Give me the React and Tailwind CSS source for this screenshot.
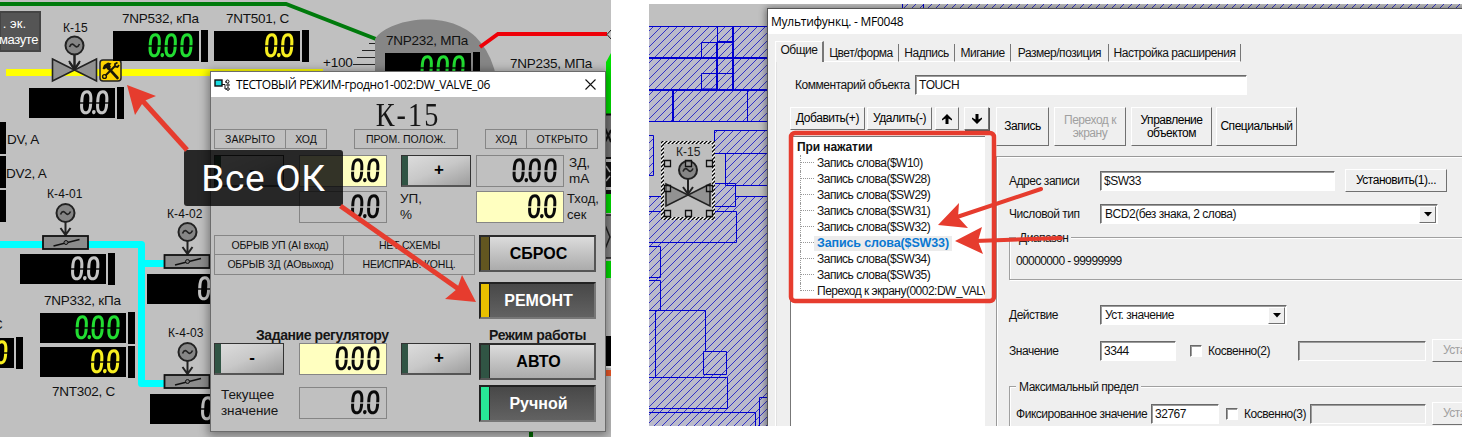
import React from "react";

/* ---------- seven-segment style readouts ---------- */

function Digits({ value, className = "" }) {
  return (
    <span
      className={
        "inline-flex origin-right -skew-x-4 scale-x-[.78] font-['Roboto'] text-[33px] font-medium leading-[38px] tracking-[1.6px] [mask-image:linear-gradient(#000_48%,transparent_49%,transparent_51%,#000_52%)] " +
        className
      }
    >
      {value.split("").map((c, i) =>
        c === "." ? (
          <span key={i} className="-ml-[5px] w-[5px]">.</span>
        ) : (
          <span key={i}>{c}</span>
        )
      )}
    </span>
  );
}

function Led({ value, className }) {
  return (
    <div className={"absolute flex h-[32px] items-center gap-[2px] " + className}>
      <div className="flex h-[30px] w-[86px] items-center justify-end bg-black pr-[4px]">
        <Digits value={value} />
      </div>
      <div className="h-[32px] w-[7px] bg-black" />
    </div>
  );
}

function Tag({ className, small, children }) {
  return (
    <span
      className={
        "absolute whitespace-nowrap font-['Liberation_Sans'] leading-[16px] text-[#111] " +
        (small ? "text-[12px] tracking-[.1px] " : "text-[13.5px] tracking-[-.25px] ") +
        className
      }
    >
      {children}
    </span>
  );
}

/* ---------- process diagram drawing ---------- */

function Motor({ x, y, stem }) {
  return (
    <g transform={`translate(${x} ${y})`} stroke="#222" strokeWidth="2" fill="none">
      <circle r="9" fill="#868686" />
      <path d="M-5 1.5 C-3 -3 -1 -1 0 0 S3 3 5 -1.5" strokeWidth="1.7" />
      <path d={`M0 9 V${stem} M-5 ${stem - 7} L0 ${stem} L5 ${stem - 7}`} />
    </g>
  );
}

function GateValve({ x, y }) {
  return (
    <path
      d={`M${x - 22} ${y - 11} L${x} ${y} L${x - 22} ${y + 11} Z M${x + 22} ${y - 11} L${x} ${y} L${x + 22} ${y + 11} Z`}
      fill="#929292"
      stroke="#222"
      strokeWidth="1.6"
    />
  );
}

function Damper({ x, y }) {
  return (
    <g transform={`translate(${x} ${y})`}>
      <rect x="0.5" y="0.5" width="45" height="13" fill="#8c8c8c" stroke="#111" strokeWidth="1.8" />
      <path d="M11 10.5 L37 4" stroke="#111" strokeWidth="1.6" />
      <circle cx="23.5" cy="7" r="2" fill="#777" stroke="#111" />
    </g>
  );
}

function Piping() {
  return (
    <svg className="absolute inset-0" width="611" height="437" viewBox="0 0 611 437" fill="none">
      <path d="M0 4 H286 L376 39" stroke="#007a0c" strokeWidth="4" />
      <path d="M375 80 V39 C390 17 455 8 481 43 Q492 56 497 80 Z" fill="#868686" />
      <path d="M480 47 L498 34 H607" stroke="#ee0008" strokeWidth="4" />
      <path d="M611 30 L607 34.5 L611 39" stroke="#222" />
      <path d="M369 43.500H375 M362 50.500H375 M357 57.500H375 M353 64.500H375 M350 71.500H375" stroke="#222" />
      <path d="M6 72.500 H323" stroke="#ffff00" strokeWidth="7" />
      <path d="M0 244.500 H141.500 V383.500 H165 M141 263.500 H165" stroke="#00ffff" strokeWidth="7" strokeLinejoin="round" />
      <Motor x={74.5} y={45.500} stem={24} />
      <GateValve x={74.5} y={70} />
      <path d="M74.500 55 V69 M69 61 L74.500 69 L80 61" stroke="#222" strokeWidth="2" />
      <Motor x={65.500} y={213} stem={22} />
      <Damper x={42.500} y={235.500} />
      <Motor x={187.500} y={232} stem={22} />
      <Damper x={164} y={254.500} />
      <Motor x={187.500} y={352} stem={22} />
      <Damper x={164} y={374.500} />

      <g transform="translate(99 59)">
        <rect x="1" y="1" width="21" height="21" rx="3" fill="#ffd400" stroke="#222" strokeWidth="1.5" />
        <path d="M8 7.500 L18.500 19" stroke="#1a1608" strokeWidth="2.6" strokeLinecap="round" />
        <path d="M3.500 9.500 L5 6 L9 3.500 L12.500 4.500 L11 6 L12 8 L9 11 L7.500 9 L5 10.500 Z" fill="#1a1608" />
        <path d="M6.500 16.500 L16 7" stroke="#1a1608" strokeWidth="2" />
        <path d="M18.500 3.500 L16 5 L16 7.500 L18.500 8 L20 6" stroke="#1a1608" strokeWidth="1.8" />
        <circle cx="5.500" cy="17.500" r="1.900" stroke="#1a1608" strokeWidth="1.4" />
      </g>

      <path d="M606 62 L611 53 V114 H606 Z" fill="#00df00" />
      <path d="M605 115 H611 V157 H605 Z" fill="#777" />
      <path d="M605 114.500 H611 M605 128 L611 142 M605 142 L611 130 M605 158 H611" stroke="#111" strokeWidth="2" />
      <path d="M605 162 H611 V187 H605 Z" fill="#111" />
      <path d="M606 166 L610 172 M606 181 L610 176" stroke="#bbb" strokeWidth="1.5" />
      <path d="M605 192 H611" stroke="#111" strokeWidth="4" />
      <path d="M605 194 H611 V213 H605 Z M605 261 H611 V278 H605 Z" fill="#00df00" />
      <path d="M605 215 H611 V258 H605 Z" fill="#868686" />
      <path d="M605 215 H611 M605 258 H611 M605 225 L610 237 L605 249" stroke="#222" strokeWidth="1.5" />
      <path d="M605 336 H611 V366 H605 Z" fill="#000" />
      <path d="M605 367 H611" stroke="#eee" strokeWidth="2" />
      <path d="M605 370 H611 V376 H605 Z" fill="#f05a28" />
      <path d="M531 431 V437" stroke="#006b00" strokeWidth="4" />
    </svg>
  );
}

/* ---------- test-mode window ---------- */

function Cell({ className = "", children }) {
  return (
    <div className={"flex items-center justify-center whitespace-nowrap border border-[#868686] text-[10.5px] leading-none text-[#111] " + className}>
      {children}
    </div>
  );
}

function Field({ value, className = "" }) {
  return (
    <div className={"flex h-[32px] w-[88px] shrink-0 items-center justify-end border border-[#858585] pr-[4px] text-[#0a0a0a] " + className}>
      <Digits value={value} />
    </div>
  );
}

function StepButton({ children }) {
  return (
    <button className="flex h-[32px] w-[70px] shrink-0 border border-b-2 border-[#333] border-b-[#555] bg-linear-to-br from-[#dedede] via-[#c8c8c8] to-[#9d9d9d] p-0">
      <span className="h-full w-[6px] bg-[#305444]" />
      <span className="flex-1 text-[17px] font-bold leading-[28px] text-black">{children}</span>
    </button>
  );
}

function ModeButton({ lamp, dark, className = "", children }) {
  return (
    <button
      className={
        "flex h-[37px] w-[117px] shrink-0 border-2 p-0 " +
        (dark
          ? "border-[#222] border-r-[#777] border-b-[#777] bg-linear-to-b from-[#484848] to-[#626262] text-white "
          : "border-[#2b2b2b] border-r-[#555] border-b-[#555] bg-linear-to-b from-[#dcdcdc] to-[#ababab] text-black ") +
        className
      }
    >
      <span className={"h-full w-[9px] border-r border-[#222] " + lamp} />
      <span className="flex-1 pr-[7px] text-center text-[16px] font-bold leading-[33px]">{children}</span>
    </button>
  );
}

function TestWindow() {
  return (
    <section className="absolute left-[210px] top-[71px] flex h-[361px] w-[396px] flex-col border border-[#6c6c6c] bg-[#c0c0c0] font-['Liberation_Sans'] text-[#161616] shadow-[0_2px_9px_2px_rgba(0,0,0,.38)]">
      <header className="flex h-[25px] shrink-0 items-center bg-white pl-[3px] pr-[9px]">
        <svg width="17" height="13" viewBox="0 0 17 13" fill="none" stroke="#111">
          <rect x="1" y="2" width="7" height="6" fill="#18dbe2" strokeWidth="1.4" />
          <path d="M8 6.500 H11 V11 H13 M11 4 H13" />
          <circle cx="13.500" cy="3.500" r="1.500" /><circle cx="14" cy="7" r="1.200" /><circle cx="14" cy="11" r="1.300" />
        </svg>
        <h1 className="ml-[5px] flex-1 whitespace-nowrap font-['Open_Sans'] text-[12px] leading-[18px] tracking-[-.41px] text-black">
          ТЕСТОВЫЙ РЕЖИМ-гродно1-002:DW_VALVE_06
        </h1>
        <svg width="11" height="11" viewBox="0 0 11 11" stroke="#111" strokeWidth="1.1"><path d="M.5 .5 L10.500 10.500 M10.500 .5 L.5 10.500" /></svg>
      </header>

      <div className="flex h-[32px] justify-center">
        <span className="block scale-x-[.83] font-['Liberation_Serif'] text-[34px] leading-[36px] tracking-[2.5px]">К-15</span>
      </div>

      <div className="flex h-[20px] pl-[3px]">
        <Cell className="w-[72px]">ЗАКРЫТО</Cell>
        <Cell className="-ml-px w-[42px]">ХОД</Cell>
        <Cell className="ml-[27px] w-[104px]">ПРОМ. ПОЛОЖ.</Cell>
        <Cell className="ml-[27px] w-[42px]">ХОД</Cell>
        <Cell className="-ml-px w-[72px]">ОТКРЫТО</Cell>
      </div>

      <div className="mt-[6px] flex h-[32px] pl-[3px]">
        <StepButton>-</StepButton>
        <Field value="0.0" className="ml-[15px] bg-[#ffffc0]" />
        <div className="ml-[14px]"><StepButton>+</StepButton></div>
        <Field value="0.00" className="ml-[5px]" />
        <p className="ml-[5px] text-[13.5px] leading-[16px]">ЗД,<br />mA</p>
      </div>
      <div className="mt-[4px] flex h-[32px] pl-[88px]">
        <Field value="0.0" />
        <p className="ml-[13px] w-[76px] text-[13.5px] leading-[16px]">УП,<br />%</p>
        <Field value="0.0" className="bg-[#ffffc0]" />
        <p className="ml-[3px] text-[13px] leading-[16px]">Тход,<br />сек</p>
      </div>

      <div className="mt-[12px] flex pl-[3px]">
        <div className="w-[265px]">
          <div className="grid h-[39px] w-[260px] grid-cols-[130px_131px] grid-rows-[20px_20px] tracking-[-.2px]">
            <Cell className="pl-[2px]">ОБРЫВ УП (AI вход)</Cell>
            <Cell className="-ml-px pl-[1px]">НЕТ СХЕМЫ</Cell>
            <Cell className="-mt-px pl-[3px]">ОБРЫВ ЗД (AOвыход)</Cell>
            <Cell className="-ml-px -mt-px">НЕИСПРАВ. КОНЦ.</Cell>
          </div>
          <p className="mt-[54px] pl-[42px] text-[14px] font-bold leading-[15px] tracking-[-.42px]">Задание регулятору</p>
          <div className="flex">
            <StepButton>-</StepButton>
            <Field value="0.00" className="ml-[15px] bg-[#ffffc0]" />
            <div className="ml-[14px]"><StepButton>+</StepButton></div>
          </div>
          <div className="mt-[12px] flex">
            <p className="w-[85px] pl-[7px] text-[13.5px] leading-[16px] tracking-[-.1px]">Текущее<br />значение</p>
            <Field value="0.0" />
          </div>
        </div>
        <div className="flex w-[117px] flex-col">
          <ModeButton lamp="bg-[#625620]">СБРОС</ModeButton>
          <ModeButton dark lamp="bg-[#e8c000]" className="mt-[10px]">РЕМОНТ</ModeButton>
          <p className="mt-[9px] whitespace-nowrap pl-[10px] text-[14px] font-bold leading-[15px] tracking-[-.35px]">Режим работы</p>
          <ModeButton lamp="bg-[#305444]">АВТО</ModeButton>
          <ModeButton dark lamp="bg-[#28e696]" className="mt-[5px]">Ручной</ModeButton>
        </div>
      </div>
    </section>
  );
}

function ProcessScreen() {
  return (
    <main className="relative h-[437px] w-[611px] shrink-0 overflow-hidden bg-[#c0c0c0]">
      <Piping />
      <div className="absolute -left-px top-[11px] flex h-[41px] w-[42px] flex-col items-end whitespace-nowrap border-2 border-[#444] bg-[#555] pt-[3px] font-['Liberation_Sans'] text-[13px] leading-[16px] text-white">
        <p className="pr-[13px]">. эк.</p>
        <p className="pr-px tracking-[-.4px]">мазуте</p>
      </div>
      <Tag small className="left-[63px] top-[20px]">К-15</Tag>
      <Tag className="left-[122px] top-[11px]">7NP532, кПа</Tag>
      <Tag className="left-[226px] top-[11px]">7NT501, С</Tag>
      <Tag className="left-[386px] top-[33px]">7NP232, МПа</Tag>
      <Tag className="left-[510px] top-[56px]">7NP235, МПа</Tag>
      <Tag className="left-[323px] top-[55px]">+100</Tag>
      <Tag className="left-[7px] top-[132px]">DV, A</Tag>
      <Tag className="left-[6px] top-[166px]">DV2, A</Tag>
      <Tag small className="left-[47px] top-[186px]">К-4-01</Tag>
      <Tag small className="left-[167px] top-[206px]">К-4-02</Tag>
      <Tag small className="left-[168px] top-[325px]">К-4-03</Tag>
      <Tag className="left-[44px] top-[293px]">7NP332, кПа</Tag>
      <Tag className="left-[52px] top-[384px]">7NT302, С</Tag>
      <Tag className="-left-[7px] top-[317px]">С</Tag>
      <Led value="0.00" className="left-[113px] top-[30px] text-[#22dd32]" />
      <Led value="0.0" className="left-[214px] top-[30px] text-[#f7ee20]" />
      <Led value="0.0" className="left-[29px] top-[87px] text-[#c4c4c4]" />
      <Led value="0.0" className="left-[20px] top-[253px] text-[#c4c4c4]" />
      <Led value="0.00" className="left-[40px] top-[312px] text-[#22dd32]" />
      <Led value="0.0" className="left-[40px] top-[346px] text-[#f7ee20]" />
      <Led value="0.0" className="left-[147px] top-[273px] text-[#c4c4c4]" />
      <Led value="0.0" className="left-[150px] top-[393px] text-[#c4c4c4]" />
      <Led value="0.0" className="-left-[72px] top-[337px] text-[#f7ee20]" />
      <Led value="0.00" className="left-[385px] top-[52px] text-[#22dd32]" />
      <div className="absolute left-0 top-[122px] flex w-[6px] flex-col gap-[2px]">
        <div className="h-[32px] bg-black" />
        <div className="h-[32px] bg-black" />
        <div className="h-[32px] bg-black" />
      </div>
      <TestWindow />
      <div className="absolute left-[184px] top-[150px] flex h-[56px] w-[159px] items-center justify-center rounded-[3px] bg-black/80 font-['Roboto'] text-[37px] leading-none tracking-[.7px] text-white">
        Все ОК
      </div>
      <svg className="absolute inset-0" width="611" height="437" viewBox="0 0 611 437" fill="#e63c2e">
        <path d="M187 150 L140 98" stroke="#e63c2e" strokeWidth="5" />
        <path d="M127 85 L156 96 L144 101 L135 115 Z" />
        <path d="M340.500 206 L460 290" stroke="#e63c2e" strokeWidth="5" />
        <path d="M476 302 L462 275 L457 289 L445 299 Z" />
      </svg>
    </main>
  );
}

/* ---------- editor canvas behind the dialog ---------- */

function EditorCanvas() {
  return (
    <svg className="absolute inset-0" width="813" height="422" viewBox="649 4 813 422" fill="none">
      <defs>
        <pattern id="hatch" width="8" height="8" patternUnits="userSpaceOnUse">
          <path d="M-1 9 L9 -1 M-1 1 L1 -1 M7 9 L9 7" stroke="#2424c4" strokeWidth=".9" />
        </pattern>
        <pattern id="ants" width="4" height="4" patternUnits="userSpaceOnUse">
          <rect width="4" height="4" fill="#fff" />
          <path d="M-1 5 L5 -1 M-1 1 L1 -1 M3 5 L5 3" stroke="#000" strokeWidth="1.300" />
        </pattern>
      </defs>
      <rect x="649" y="4" width="813" height="422" fill="#c0c0c0" />
      <path fill="#babacb" d="M649 26H768V121H649Z M714 130H768V153H714Z M725 154H768V185H725Z M715 183H736V206H715Z M649 196H768V426H649Z M649 135H654V175H649Z" />
      <path fill="url(#hatch)" d="M649 26H768V121H649Z M714 130H768V153H714Z M725 154H768V185H725Z M715 183H736V206H715Z M649 196H768V426H649Z M649 135H654V175H649Z M902 4H1462V9H902Z" />
      <g stroke="#0000ce" strokeWidth="1">
        <path d="M649 26.500H768 M649 121.500H768 M747.500 90V121 M717.500 26V90 M649 135.500H653.500V175.500H649 M768 130.500H714.500V153.500H768 M768 185.500H725.500V154 M715 183.500H735.500V206.500H715 M768 196.500H736 M649 196.500H663 M649 211.500H736.500V242.500H649 M649 246.500H660.500V277.500H649 M649 280.500H660.500V310 M649 310.500H705.500V351 M655.500 310V377 M703.500 351.500H726.500V374.500H703.500Z M649 377.500H727.500V408.500H649 M649 412.500H755.500V426 M768 397.500H759.500V426 M902.500 4V9 M923.500 4V9" />
        <path strokeWidth="2" d="M649 58H768 M649 90H768 M733 26V90 M717 42H733 M717 42V90 M673 90V121" />
        <path d="M701.500 42.500H717V58H701.500Z M701.500 73.500H717V89H701.500Z M717 73.500H733" />
      </g>
      <rect x="661" y="141" width="54" height="79" fill="url(#ants)" />
      <rect x="664" y="144" width="48" height="73" fill="#bebebe" />
      <GateValve x={688} y={195} />
      <Motor x={688} y={170} stem={24} />
      <g stroke="#111" strokeWidth="1.300" fill="#c0c0c0">
        <path d="M664.500 160.500h6v6h-6z M685.500 160.500h6v6h-6z M706.500 160.500h6v6h-6z M664.500 185.500h6v6h-6z M706.500 185.500h6v6h-6z M664.500 210.500h6v6h-6z M685.500 210.500h6v6h-6z M706.500 210.500h6v6h-6z" fillOpacity=".3" />
      </g>
    </svg>
  );
}

/* ---------- property dialog ---------- */

const raised = "border-[1.5px] border-t-white border-l-white border-r-[#707070] border-b-[#707070] bg-[#efefef] ";
const sunken = "border border-t-[#696969] border-l-[#696969] border-r-white border-b-white shadow-[inset_1px_1px_0_#9b9b9b] ";

function Btn({ className = "", disabled, children }) {
  return (
    <button
      disabled={disabled}
      className={"flex shrink-0 items-center justify-center whitespace-nowrap text-center leading-[13px] " + raised + (disabled ? "text-[#a0a0a0] " : "text-black ") + className}
    >
      {children}
    </button>
  );
}

function Input({ value = "", disabled, className = "" }) {
  return (
    <div className={"flex h-[20px] shrink-0 items-center whitespace-nowrap pl-[3px] " + sunken + (disabled ? "bg-[#ededed] " : "bg-white ") + className}>
      {value}
    </div>
  );
}

function Select({ value, className = "" }) {
  return (
    <div className={"flex h-[20px] shrink-0 items-center justify-between whitespace-nowrap bg-white pl-[4px] " + sunken + className}>
      {value}
      <span className={"mr-px flex h-[17px] w-[17px] items-center justify-center " + raised}>
        <svg width="8" height="5" viewBox="0 0 8 5"><path d="M0 0H8L4 4.500Z" fill="#000" /></svg>
      </span>
    </div>
  );
}

function Check({ label, className = "" }) {
  return (
    <div className={"flex shrink-0 items-center whitespace-nowrap " + className}>
      <span className={"mr-[6px] h-[12px] w-[12px] bg-white " + sunken} />
      {label}
    </div>
  );
}

const steps = [
  "Запись слова($W10)",
  "Запись слова($SW28)",
  "Запись слова($SW29)",
  "Запись слова($SW31)",
  "Запись слова($SW32)",
  "Запись слова($SW33)",
  "Запись слова($SW34)",
  "Запись слова($SW35)",
  "Переход к экрану(0002:DW_VALVE_06)",
];

function EventTree() {
  return (
    <div className="h-[292px] w-[195px] shrink-0 overflow-hidden border-l border-t border-[#777] bg-white pt-[2px] text-[12px]">
      <p className="pl-[6px] font-bold leading-[16px] tracking-[-.1px]">При нажатии</p>
      <ul>
        {steps.map((s, i) => (
          <li key={s} className="ml-[9px] flex h-[16px] items-center">
            <span className={"flex w-[14px] shrink-0 self-stretch border-l border-dotted border-[#999] " + (i === steps.length - 1 ? "mb-[8px]" : "")}>
              <span className="h-[8px] w-full border-b border-dotted border-[#999]" />
            </span>
            <span
              className={
                "whitespace-nowrap px-[3px] leading-[15px] " +
                (i === 5 ? "bg-[#ececec] text-[12.5px] font-bold tracking-[-.12px] text-[#0a78d2]" : "tracking-[-.5px]")
              }
            >
              {s}
            </span>
          </li>
        ))}
      </ul>
    </div>
  );
}

function PropertyDialog() {
  const tabs = [
    ["Цвет/форма", "w-[75px]"],
    ["Надпись", "w-[56px]"],
    ["Мигание", "w-[56px]"],
    ["Размер/позиция", "w-[98px]"],
    ["Настройка расширения", "w-[132px]"],
  ];
  return (
    <section className="absolute left-[118px] top-[4px] flex h-[430px] w-[720px] flex-col border border-[#555] bg-[#efefef] text-[12px] leading-[14px] tracking-[-.47px] text-[#111] shadow-[-1px_0_7px_rgba(0,0,0,.45)]">
      <header className="flex h-[25px] shrink-0 items-center bg-white pl-[3px] font-['Open_Sans'] text-[12px] leading-[18px] tracking-[-.25px] text-black">
        Мультифункц. - MF0048
      </header>

      <nav className="flex h-[28px] shrink-0 items-end pl-[7px]">
        <span className="flex h-[21px] w-[49px] items-start justify-center border-l border-r-2 border-t border-l-white border-r-[#777] border-t-white pt-px">Общие</span>
        {tabs.map(([t, w]) => (
          <span key={t} className={"flex h-[18px] items-center justify-center whitespace-nowrap border-b border-r-[1.5px] border-b-white border-r-[#777] " + w}>
            {t}
          </span>
        ))}
      </nav>

      <div className="ml-[7px] flex flex-1 flex-col border-l border-white shadow-[inset_1px_0_0_#e2e2e2]">
        <div className="mt-[13px] flex h-[20px] items-center pl-[19px]">
          <span className="w-[120px] whitespace-nowrap">Комментарий объекта</span>
          <Input value="TOUCH" className="w-[332px]" />
        </div>

        <div className="mt-[12px] flex pl-[14px]">
          <div className="w-[206px] shrink-0">
            <div className="flex">
              <Btn className="h-[23px] w-[75px]">Добавить(+)</Btn>
              <Btn className="ml-[2px] h-[23px] w-[65px]">Удалить(-)</Btn>
              <Btn className="ml-[3px] h-[23px] w-[24px]">
                <svg width="10" height="10" viewBox="0 0 10 10"><path d="M5 0 L10 5 V6.500 L6.500 4.500 V10 H3.500 V4.500 L0 6.500 V5 Z" /></svg>
              </Btn>
              <Btn className="ml-[5px] h-[23px] w-[25px] shadow-[1px_1px_0_#555]">
                <svg width="10" height="10" viewBox="0 0 10 10"><path d="M5 10 L10 5 V3.500 L6.500 5.500 V0 H3.500 V5.500 L0 3.500 V5 Z" /></svg>
              </Btn>
            </div>
            <div className="mt-[6px]"><EventTree /></div>
          </div>

          <div className="flex-1">
            <div className="flex h-[39px]">
              <Btn className="w-[53px]">Запись</Btn>
              <Btn disabled className="ml-[5px] w-[72px]">Переход к<br />экрану</Btn>
              <Btn className="ml-[5px] w-[81px]">Управление<br />объектом</Btn>
              <Btn className="ml-[4px] w-[81px]">Специальный</Btn>
            </div>

            <div className="mt-[10px] h-[300px] border-l border-t border-[#999] pl-[12px] shadow-[inset_1px_1px_0_white]">
              <div className="mt-[12px] flex h-[23px] items-center">
                <span className="w-[91px]">Адрес записи</span>
                <Input value="$SW33" className="w-[235px]" />
                <Btn className="ml-[10px] h-[23px] w-[102px]">Установить(1)...</Btn>
              </div>
              <div className="mt-[12px] flex h-[20px] items-center">
                <span className="w-[91px]">Числовой тип</span>
                <Select value="BCD2(без знака, 2 слова)" className="w-[338px]" />
              </div>
              <div className="mt-[13px] h-[43px] w-[600px] border border-[#a0a0a0] shadow-[inset_1px_1px_0_white,1px_1px_0_white]">
                <span className="-mt-[7px] ml-[6px] block w-max bg-[#efefef] px-[3px]">Диапазон</span>
                <span className="mt-[9px] block pl-[6px] tracking-[-.62px]">00000000 - 99999999</span>
              </div>
              <div className="mt-[25px] flex h-[20px] items-center">
                <span className="w-[91px]">Действие</span>
                <Select value="Уст. значение" className="w-[187px]" />
              </div>
              <div className="mt-[14px] flex h-[23px] items-center">
                <span className="w-[91px]">Значение</span>
                <Input value="3344" className="w-[76px]" />
                <Check label="Косвенно(2)" className="ml-[14px] w-[108px]" />
                <Input disabled className="w-[128px]" />
                <Btn disabled className="ml-[6px] h-[23px] w-[102px]">Установить(2)...</Btn>
              </div>
              <div className="mt-[24px] h-[60px] w-[600px] border border-[#a0a0a0] shadow-[inset_1px_1px_0_white]">
                <span className="-mt-[7px] ml-[6px] block w-max bg-[#efefef] px-[3px]">Максимальный предел</span>
                <div className="mt-[8px] flex h-[23px] items-center pl-[6px]">
                  <span className="w-[135px] whitespace-nowrap">Фиксированное значение</span>
                  <Input value="32767" className="w-[68px]" />
                  <Check label="Косвенно(3)" className="ml-[7px] w-[84px]" />
                  <Input disabled className="w-[116px]" />
                  <Btn disabled className="ml-[6px] h-[23px] w-[102px]">Установить(3)...</Btn>
                </div>
              </div>
            </div>
          </div>
        </div>
      </div>
    </section>
  );
}

function EditorScreen() {
  return (
    <main className="relative ml-[38px] mt-[4px] h-[422px] w-[813px] shrink-0 overflow-hidden font-['Liberation_Sans']">
      <EditorCanvas />
      <span className="absolute left-[27px] top-[141px] text-[12px] leading-[14px] text-[#222]">К-15</span>
      <PropertyDialog />
      <svg className="absolute inset-0" width="813" height="422" viewBox="649 4 813 422" fill="#e63c2e">
        <rect x="791" y="133" width="203" height="168" rx="4" fill="none" stroke="#e63c2e" strokeWidth="4.500" />
        <path d="M1041 189 L957 217 M1061 238 L975 241" stroke="#e63c2e" strokeWidth="4" strokeLinecap="round" />
        <path d="M938 225 L959 203 L958 217 L968 228 Z M955 241 L982 227 L978 241 L983 254 Z" />
      </svg>
    </main>
  );
}

export default function App() {
  return (
    <div className="flex h-[437px] w-[1464px] overflow-hidden bg-white">
      <ProcessScreen />
      <EditorScreen />
    </div>
  );
}
